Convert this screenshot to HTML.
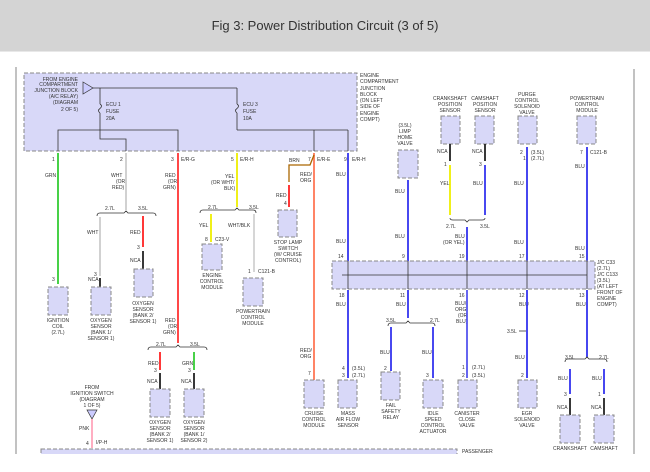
<!DOCTYPE html>
<html><head><meta charset="utf-8"><style>
html,body{margin:0;padding:0;background:#fff;width:650px;height:472px;overflow:hidden}
.hd{position:absolute;left:0;top:0;width:650px;height:51px;background:#d4d4d4;border-bottom:1px solid #e8e8e8}
.hd div{position:absolute;left:0;right:0;top:18px;text-align:center;font:13px "Liberation Sans",sans-serif;color:#333}
svg{position:absolute;left:0;top:0}
text{font-family:"Liberation Sans",sans-serif;font-size:5px;fill:#333}
.b{fill:#d8d8f8;stroke:#888;stroke-width:1;stroke-dasharray:4 2}
.w{fill:none;stroke-width:1.8}
.k{stroke:#222;stroke-width:1.8}
.t{stroke:#333;stroke-width:0.8;fill:none}
</style></head><body>
<div class="hd"><div>Fig 3: Power Distribution Circuit (3 of 5)</div></div>
<svg width="650" height="472" viewBox="0 0 650 472">
<line x1="16" y1="67" x2="16" y2="454" stroke="#999" stroke-width="1.2"/>
<line x1="634" y1="69" x2="634" y2="454" stroke="#999" stroke-width="1.2"/>
<rect class="b" x="24" y="73" width="333" height="78"/>
<path class="t" d="M90 88H237M100 88V104M100 113V139H126V151M237 88V104M237 113V130M58 151V130H178V151M237 130H348M314 130V151M348 130V151"/>
<path class="t" d="M100 104q3 2 0 4.5q-3 2 0 4.5M237 104q3 2 0 4.5q-3 2 0 4.5"/>
<path d="M83 82l10 6l-10 6z" fill="#ccf" stroke="#333" stroke-width=".7"/>
<text x="78" y="81" text-anchor="end">FROM ENGINE</text><text x="78" y="86" text-anchor="end">COMPARTMENT</text><text x="78" y="92" text-anchor="end">JUNCTION BLOCK</text><text x="78" y="98" text-anchor="end">(A/C RELAY)</text><text x="78" y="104" text-anchor="end">(DIAGRAM</text><text x="78" y="111" text-anchor="end">2 OF 5)</text>
<text x="106" y="106">ECU 1</text><text x="106" y="113">FUSE</text><text x="106" y="120">20A</text>
<text x="243" y="106">ECU 3</text><text x="243" y="113">FUSE</text><text x="243" y="120">10A</text>
<text x="360" y="77">ENGINE</text><text x="360" y="83">COMPARTMENT</text><text x="360" y="90">JUNCTION</text><text x="360" y="96">BLOCK</text><text x="360" y="102">(ON LEFT</text><text x="360" y="108">SIDE OF</text><text x="360" y="115">ENGINE</text><text x="360" y="121">COMPT)</text>
<line class="w" x1="58" y1="153" x2="58" y2="284" stroke="#3c3"/>
<line class="w" x1="126" y1="153" x2="126" y2="210" stroke="#ccc"/>
<line class="w" x1="178" y1="153" x2="178" y2="343" stroke="#f33"/>
<line class="w" x1="237" y1="153" x2="237" y2="207" stroke="#ee0"/>
<line class="w" x1="314" y1="153" x2="314" y2="380" stroke="#f75"/>
<line class="w" x1="348" y1="153" x2="348" y2="261" stroke="#33e"/>
<line class="w" x1="348" y1="290" x2="348" y2="378" stroke="#33e"/>
<text x="52" y="161">1</text><text x="120" y="161">2</text><text x="171" y="161">3</text><text x="231" y="161">5</text><text x="181" y="161">E/R-G</text><text x="240" y="161">E/R-H</text><text x="308" y="161">7</text><text x="317" y="161">E/R-E</text><text x="344" y="161">9</text><text x="352" y="161">E/R-H</text>
<text x="45" y="177">GRN</text>
<text x="111" y="177">WHT</text><text x="116" y="183">(OR</text><text x="112" y="189">RED)</text>
<text x="165" y="177">RED</text><text x="168" y="183">(OR</text><text x="163" y="189">GRN)</text>
<text x="225" y="178">YEL</text><text x="211" y="184">(OR WHT/</text><text x="224" y="190">BLK)</text>
<text x="289" y="162">BRN</text><text x="300" y="176">RED/</text><text x="300" y="182">ORG</text>
<text x="336" y="176">BLU</text>
<path class="t" d="M97 216q0-3 3-3H124l2-2l2 2H153q3 0 3 3"/>
<text x="105" y="210">2.7L</text><text x="138" y="210">3.5L</text>
<line class="w" x1="100" y1="217" x2="100" y2="276" stroke="#ccc"/><line class="k" x1="100" y1="278" x2="100" y2="287"/>
<line class="w" x1="143" y1="216" x2="143" y2="247" stroke="#f22"/><line class="k" x1="143" y1="251" x2="143" y2="269"/>
<text x="87" y="234">WHT</text><text x="130" y="234">RED</text><text x="137" y="249">3</text><text x="130" y="262">NCA</text><text x="94" y="276">3</text><text x="88" y="281">NCA</text>
<rect class="b" x="48" y="287" width="20" height="28"/><rect class="b" x="91" y="287" width="20" height="28"/><rect class="b" x="134" y="269" width="19" height="28"/>
<text x="52" y="281">3</text>
<text x="58" y="322" text-anchor="middle">IGNITION</text><text x="58" y="328" text-anchor="middle">COIL</text><text x="58" y="334" text-anchor="middle">(2.7L)</text>
<text x="101" y="322" text-anchor="middle">OXYGEN</text><text x="101" y="328" text-anchor="middle">SENSOR</text><text x="101" y="334" text-anchor="middle">(BANK 1/</text><text x="101" y="340" text-anchor="middle">SENSOR 1)</text>
<text x="143" y="305" text-anchor="middle">OXYGEN</text><text x="143" y="311" text-anchor="middle">SENSOR</text><text x="143" y="317" text-anchor="middle">(BANK 2/</text><text x="143" y="323" text-anchor="middle">SENSOR 1)</text>
<text x="165" y="322">RED</text><text x="168" y="328">(OR</text><text x="163" y="334">GRN)</text>
<path class="t" d="M148 350q0-3 3-3H176l2-2l2 2H204q3 0 3 3"/>
<text x="156" y="346">2.7L</text><text x="190" y="346">3.5L</text>
<line class="w" x1="160" y1="352" x2="160" y2="370" stroke="#f22"/><line class="k" x1="160" y1="373" x2="160" y2="389"/>
<line class="w" x1="194" y1="352" x2="194" y2="370" stroke="#3c3"/><line class="k" x1="194" y1="373" x2="194" y2="389"/>
<text x="148" y="365">RED</text><text x="182" y="365">GRN</text><text x="154" y="372">3</text><text x="188" y="372">3</text><text x="147" y="383">NCA</text><text x="181" y="383">NCA</text>
<rect class="b" x="150" y="389" width="20" height="28"/><rect class="b" x="184" y="389" width="20" height="28"/>
<text x="160" y="424" text-anchor="middle">OXYGEN</text><text x="160" y="430" text-anchor="middle">SENSOR</text><text x="160" y="436" text-anchor="middle">(BANK 2/</text><text x="160" y="442" text-anchor="middle">SENSOR 1)</text>
<text x="194" y="424" text-anchor="middle">OXYGEN</text><text x="194" y="430" text-anchor="middle">SENSOR</text><text x="194" y="436" text-anchor="middle">(BANK 1/</text><text x="194" y="442" text-anchor="middle">SENSOR 2)</text>
<text x="92" y="389" text-anchor="middle">FROM</text><text x="92" y="395" text-anchor="middle">IGNITION SWITCH</text><text x="92" y="401" text-anchor="middle">(DIAGRAM</text><text x="92" y="407" text-anchor="middle">1 OF 5)</text>
<path d="M87 410h10l-5 9z" fill="#ccf" stroke="#333" stroke-width=".7"/>
<line x1="92" y1="419" x2="92" y2="448" stroke="#f79" stroke-width="1.2"/>
<text x="79" y="430">PNK</text><text x="86" y="445">4</text><text x="96" y="444">I/P-H</text>
<path class="t" d="M200 213q0-3 3-3H235l2-2l2 2H253q3 0 3 3"/>
<text x="208" y="209">2.7L</text><text x="249" y="209">3.5L</text>
<line class="w" x1="211" y1="214" x2="211" y2="242" stroke="#ee0"/>
<line x1="254" y1="214" x2="254" y2="272" stroke="#bbb" stroke-width="1.2"/>
<text x="199" y="227">YEL</text><text x="228" y="227">WHT/BLK</text><text x="205" y="241">8</text><text x="215" y="241">C23-V</text><text x="258" y="273">C121-B</text><text x="248" y="273">1</text>
<rect class="b" x="202" y="244" width="20" height="26"/><rect class="b" x="243" y="278" width="20" height="28"/>
<text x="212" y="277" text-anchor="middle">ENGINE</text><text x="212" y="283" text-anchor="middle">CONTROL</text><text x="212" y="289" text-anchor="middle">MODULE</text>
<text x="253" y="313" text-anchor="middle">POWERTRAIN</text><text x="253" y="319" text-anchor="middle">CONTROL</text><text x="253" y="325" text-anchor="middle">MODULE</text>
<path d="M289 182V165H310L314 155" fill="none" stroke="#a60" stroke-width="1.3"/>
<line class="w" x1="289" y1="185" x2="289" y2="207" stroke="#f22"/>
<text x="276" y="197">RED</text><text x="284" y="205">4</text>
<rect class="b" x="278" y="210" width="19" height="27"/>
<text x="288" y="244" text-anchor="middle">STOP LAMP</text><text x="288" y="250" text-anchor="middle">SWITCH</text><text x="288" y="256" text-anchor="middle">(W/ CRUISE</text><text x="288" y="262" text-anchor="middle">CONTROL)</text>
<text x="300" y="352">RED/</text><text x="300" y="358">ORG</text><text x="308" y="375">7</text>
<rect class="b" x="304" y="380" width="20" height="28"/>
<text x="314" y="415" text-anchor="middle">CRUISE</text><text x="314" y="421" text-anchor="middle">CONTROL</text><text x="314" y="427" text-anchor="middle">MODULE</text>
<rect class="b" x="398" y="150" width="20" height="28"/><rect class="b" x="441" y="116" width="19" height="28"/><rect class="b" x="475" y="116" width="19" height="28"/><rect class="b" x="518" y="116" width="19" height="28"/><rect class="b" x="577" y="116" width="19" height="28"/>
<text x="405" y="127" text-anchor="middle">(3.5L)</text><text x="405" y="133" text-anchor="middle">LIMP</text><text x="405" y="139" text-anchor="middle">HOME</text><text x="405" y="145" text-anchor="middle">VALVE</text>
<text x="450" y="100" text-anchor="middle">CRANKSHAFT</text><text x="450" y="106" text-anchor="middle">POSITION</text><text x="450" y="112" text-anchor="middle">SENSOR</text>
<text x="485" y="100" text-anchor="middle">CAMSHAFT</text><text x="485" y="106" text-anchor="middle">POSITION</text><text x="485" y="112" text-anchor="middle">SENSOR</text>
<text x="527" y="96" text-anchor="middle">PURGE</text><text x="527" y="102" text-anchor="middle">CONTROL</text><text x="527" y="108" text-anchor="middle">SOLENOID</text><text x="527" y="114" text-anchor="middle">VALVE</text>
<text x="587" y="100" text-anchor="middle">POWERTRAIN</text><text x="587" y="106" text-anchor="middle">CONTROL</text><text x="587" y="112" text-anchor="middle">MODULE</text>
<line class="w" x1="408" y1="180" x2="408" y2="261" stroke="#33e"/>
<line class="k" x1="450" y1="144" x2="450" y2="161"/><line class="k" x1="485" y1="144" x2="485" y2="161"/>
<line class="w" x1="450" y1="165" x2="450" y2="215" stroke="#ee0"/><line class="w" x1="485" y1="165" x2="485" y2="215" stroke="#33e"/>
<path class="t" d="M450 218q0 2 3 2H465l2 2l2-2H482q3 0 3-2"/>
<line class="w" x1="467" y1="227" x2="467" y2="261" stroke="#33e"/>
<line class="w" x1="527" y1="147" x2="527" y2="261" stroke="#33e"/><line class="w" x1="587" y1="147" x2="587" y2="261" stroke="#33e"/>
<text x="437" y="153">NCA</text><text x="472" y="153">NCA</text><text x="444" y="166">1</text><text x="479" y="166">3</text>
<text x="440" y="185">YEL</text><text x="473" y="185">BLU</text><text x="395" y="193">BLU</text>
<text x="446" y="228">2.7L</text><text x="480" y="228">3.5L</text><text x="455" y="238">BLU</text><text x="443" y="244">(OR YEL)</text>
<text x="520" y="154">2</text><text x="531" y="154">(3.5L)</text><text x="523" y="160">1</text><text x="531" y="160">(2.7L)</text>
<text x="514" y="185">BLU</text><text x="580" y="154">7</text><text x="590" y="154">C121-B</text><text x="575" y="168">BLU</text>
<text x="336" y="243">BLU</text><text x="395" y="238">BLU</text><text x="514" y="244">BLU</text><text x="575" y="250">BLU</text>
<text x="338" y="258">14</text><text x="402" y="258">9</text><text x="459" y="258">19</text><text x="519" y="258">17</text><text x="579" y="258">15</text>
<rect class="b" x="332" y="261" width="263" height="28"/>
<path class="t" d="M342 275H587M348 261V289M408 261V289M467 261V289M527 261V289M587 261V289"/>
<text x="597" y="264">J/C C33</text><text x="597" y="270">(2.7L)</text><text x="597" y="276">J/C C133</text><text x="597" y="282">(3.5L)</text><text x="597" y="288">(AT LEFT</text><text x="597" y="294">FRONT OF</text><text x="597" y="300">ENGINE</text><text x="597" y="306">COMPT)</text>
<text x="339" y="297">18</text><text x="400" y="297">11</text><text x="459" y="297">16</text><text x="519" y="297">12</text><text x="579" y="297">13</text>
<text x="336" y="306">BLU</text><text x="396" y="306">BLU</text><text x="455" y="305">BLU/</text><text x="455" y="311">ORG</text><text x="458" y="317">(OR</text><text x="456" y="323">BLU)</text><text x="519" y="306">BLU</text><text x="576" y="306">BLU</text>
<line class="w" x1="408" y1="290" x2="408" y2="318" stroke="#33e"/>
<path class="t" d="M388 326q0-3 3-3H406l2-2l2 2H432q3 0 3 3"/>
<text x="386" y="322">3.5L</text><text x="430" y="322">2.7L</text>
<line class="w" x1="391" y1="327" x2="391" y2="371" stroke="#33e"/><line class="w" x1="433" y1="327" x2="433" y2="378" stroke="#33e"/>
<text x="380" y="354">BLU</text><text x="422" y="354">BLU</text>
<line class="w" x1="467" y1="290" x2="467" y2="378" stroke="#55e"/>
<line class="w" x1="527" y1="290" x2="527" y2="378" stroke="#33e"/>
<text x="507" y="333">3.5L</text><line class="t" x1="519" y1="331" x2="526" y2="331"/>
<text x="515" y="359">BLU</text>
<line class="w" x1="587" y1="290" x2="587" y2="357" stroke="#33e"/>
<path class="t" d="M565 362q0-3 3-3H585l2-2l2 2H604q3 0 3 3"/>
<text x="565" y="359">3.5L</text><text x="599" y="359">2.7L</text>
<line class="w" x1="570" y1="369" x2="570" y2="394" stroke="#33e"/><line class="w" x1="604" y1="369" x2="604" y2="394" stroke="#33e"/>
<line class="k" x1="570" y1="398" x2="570" y2="415"/><line class="k" x1="604" y1="398" x2="604" y2="415"/>
<text x="558" y="380">BLU</text><text x="592" y="380">BLU</text><text x="564" y="396">3</text><text x="598" y="396">1</text><text x="557" y="409">NCA</text><text x="591" y="409">NCA</text>
<rect class="b" x="338" y="380" width="19" height="28"/><rect class="b" x="381" y="372" width="19" height="28"/><rect class="b" x="423" y="380" width="20" height="28"/><rect class="b" x="458" y="380" width="19" height="28"/><rect class="b" x="518" y="380" width="19" height="28"/><rect class="b" x="560" y="415" width="20" height="28"/><rect class="b" x="594" y="415" width="20" height="28"/>
<text x="342" y="370">4</text><text x="352" y="370">(3.5L)</text><text x="342" y="377">3</text><text x="352" y="377">(2.7L)</text>
<text x="384" y="370">2</text><text x="426" y="377">3</text><text x="462" y="369">1</text><text x="472" y="369">(2.7L)</text><text x="462" y="377">2</text><text x="472" y="377">(3.5L)</text><text x="521" y="377">2</text>
<text x="348" y="415" text-anchor="middle">MASS</text><text x="348" y="421" text-anchor="middle">AIR FLOW</text><text x="348" y="427" text-anchor="middle">SENSOR</text>
<text x="391" y="407" text-anchor="middle">FAIL</text><text x="391" y="413" text-anchor="middle">SAFETY</text><text x="391" y="419" text-anchor="middle">RELAY</text>
<text x="433" y="415" text-anchor="middle">IDLE</text><text x="433" y="421" text-anchor="middle">SPEED</text><text x="433" y="427" text-anchor="middle">CONTROL</text><text x="433" y="433" text-anchor="middle">ACTUATOR</text>
<text x="467" y="415" text-anchor="middle">CANISTER</text><text x="467" y="421" text-anchor="middle">CLOSE</text><text x="467" y="427" text-anchor="middle">VALVE</text>
<text x="527" y="415" text-anchor="middle">EGR</text><text x="527" y="421" text-anchor="middle">SOLENOID</text><text x="527" y="427" text-anchor="middle">VALVE</text>
<text x="570" y="450" text-anchor="middle">CRANKSHAFT</text><text x="604" y="450" text-anchor="middle">CAMSHAFT</text>
<rect class="b" x="41" y="449" width="416" height="12"/>
<text x="462" y="453">PASSENGER</text>
<rect x="0" y="454" width="650" height="18" fill="#fff"/>
</svg>
</body></html>
